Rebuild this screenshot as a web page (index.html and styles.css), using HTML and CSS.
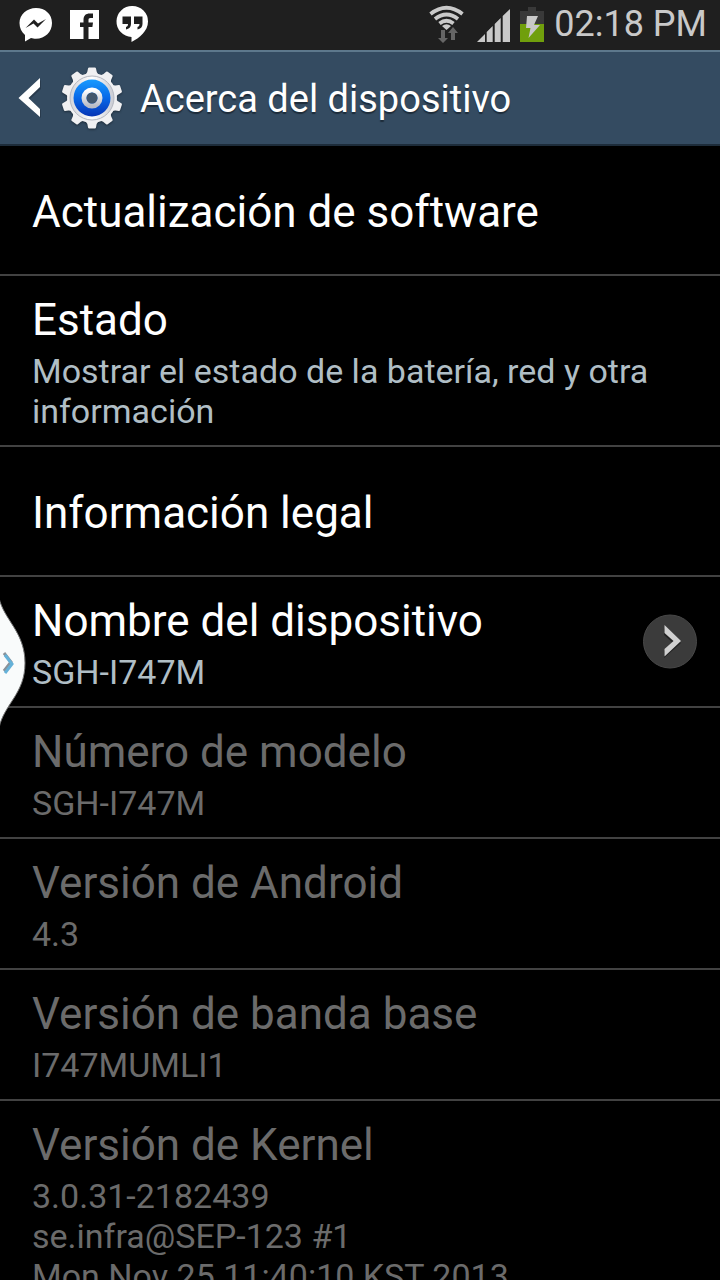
FILE: index.html
```html
<!DOCTYPE html>
<html lang="es">
<head>
<meta charset="utf-8">
<meta name="viewport" content="width=device-width, initial-scale=1">
<title>Acerca del dispositivo</title>
<link rel="stylesheet" href="styles.css">
</head>
<body>
<div class="status">
  <div class="notifications">
    <svg width="34" height="36" viewBox="0 0 34 36" aria-label="Messenger"><path fill="#fff" d="M17 2C8 2 .500 8.500.500 17c0 5 2 9 5.500 12v6.500l6-3.500c1.500.500 3 .700 5 .700 9 0 16-6.700 16-15.700S26 2 17 2z"/><path fill="#1f1f1f" d="M6.500 22l8.500-8.500 4 4 8-4.500-8.500 8.500-4-4z"/></svg>
    <svg width="30" height="30" viewBox="0 0 30 30" aria-label="Facebook"><path fill="#fff" d="M1 1h29v29H1z"/><path fill="#1f1f1f" d="M14.500 30V18H11v-4.500h3.500V11c0-4.500 2.500-6.500 6-6.500H24V9h-2.500c-1.600 0-2 .800-2 2v2.500H24l-.600 4.500h-3.900v12z"/></svg>
    <svg width="34" height="38" viewBox="0 0 34 38" aria-label="Hangouts"><path fill="#fff" d="M17.500 1a15.500 15.500 0 0 0-1 31v5c8-4 16.500-11 16.500-20.500A15.500 15.500 0 0 0 17.500 1z"/><path fill="#1f1f1f" d="M7.500 11.500h8.500V19c0 3-2 5-5 5.500V22c1.500-.500 2-1.500 2-3H7.500zM19 11.500h8.500V19c0 3-2 5-5 5.500V22c1.500-.500 2-1.500 2-3H19z"/></svg>
  </div>
  <div class="system">
    <svg width="38" height="38" viewBox="0 0 38 38" aria-label="Wi-Fi"><g fill="none" stroke="#c9c9c9" stroke-width="3.800"><path d="M1.500 9q16-12.500 32 0"/><path d="M6 14q11.500-9 23 0"/><path d="M10.500 18.500q7-5.500 14 0"/></g><path fill="#c9c9c9" d="M13 21q4.500-3.500 9 0l-4.500 4z"/><path fill="#666" d="M12 25h4v8h3l-5 5-5-5h3zM22 35v-7h-3l5-6 5 6h-3v7z"/></svg>
    <svg width="33" height="36" viewBox="0 0 33 36" aria-label="Señal"><path fill="#c9c9c9" d="M0 36l8-8v8zM9.700 36V26l6-6v16zM17.700 36V18l6-6v24zM25.700 36V10L33 3v33z"/></svg>
    <svg width="24" height="36" viewBox="0 0 24 36" aria-label="Cargando"><path fill="#393939" d="M8 1h8v4h8v13H0V5h8z"/><path fill="#709f0c" d="M0 18h24v18H0z"/><path fill="#c9c9c9" d="M7 10h11l-4 9h6L8.500 32l2-10H6z"/></svg>
    <time>02:18 PM</time>
  </div>
</div>
<header class="bar">
  <button class="back" aria-label="Atrás"><svg width="24" height="42" viewBox="0 0 24 42"><path fill="#1d2c3a" d="M23 3v9L12 22l11 11v8L2 22z" opacity=".5"/><path fill="#fff" d="M22 1v9L10.500 21 22 32v8L.500 21z"/></svg></button>
  <svg class="gear" width="64" height="64" viewBox="-32 -32 64 64" aria-hidden="true">
    <defs>
      <linearGradient id="metal" x1="0" y1="0" x2="1" y2="0"><stop offset="0" stop-color="#d2d3d9"/><stop offset=".5" stop-color="#fff"/><stop offset="1" stop-color="#c8cad2"/></linearGradient>
      <linearGradient id="blue" x1="0" y1="0" x2="0" y2="1"><stop offset="0" stop-color="#189bff"/><stop offset=".5" stop-color="#0868e8"/><stop offset="1" stop-color="#0735b5"/></linearGradient>
      <linearGradient id="ring" x1="0" y1="0" x2="0" y2="1"><stop offset="0" stop-color="#fff"/><stop offset="1" stop-color="#b9bcc6"/></linearGradient>
      <path id="tooth" d="M-6.500-23q2-2 2.500-6.500 .200-1 1.200-1h5.600q1 0 1.200 1Q4.500-25 6.500-23z"/>
    </defs>
    <g fill="#f0f0f2">
      <use href="#tooth"/><use href="#tooth" transform="rotate(36)"/><use href="#tooth" transform="rotate(72)"/><use href="#tooth" transform="rotate(108)"/><use href="#tooth" transform="rotate(144)"/><use href="#tooth" transform="rotate(180)"/><use href="#tooth" transform="rotate(216)"/><use href="#tooth" transform="rotate(252)"/><use href="#tooth" transform="rotate(288)"/><use href="#tooth" transform="rotate(324)"/>
    </g>
    <circle r="25" fill="#f0f0f2"/>
    <circle r="22" fill="url(#metal)" stroke="#b4b7c0"/>
    <circle r="18.500" fill="url(#blue)"/>
    <circle r="8" fill="none" stroke="url(#ring)" stroke-width="5"/>
    <circle r="5.500" fill="#42576d"/>
  </svg>
  <h1>Acerca del dispositivo</h1>
</header>
<main class="list">
  <button class="row single"><span class="title">Actualización de software</span></button>
  <button class="row"><span class="title">Estado</span><span class="summary">Mostrar el estado de la batería, red y otra información</span></button>
  <button class="row single"><span class="title">Información legal</span></button>
  <button class="row more">
    <span class="text"><span class="title">Nombre del dispositivo</span><span class="summary">SGH-I747M</span></span>
    <svg width="56" height="56" viewBox="0 0 56 56" aria-hidden="true"><circle cx="28" cy="27.500" r="26.500" fill="#3b3b3b" stroke="#484848"/><path fill="#222" d="M22 14v7l9 8-9 8v7l17-15z"/><path fill="#d0d0d0" d="M22.500 11v8l9 8-9 8v7.500L39 27z"/></svg>
  </button>
  <div class="row disabled"><span class="title">Número de modelo</span><span class="summary">SGH-I747M</span></div>
  <div class="row disabled"><span class="title">Versión de Android</span><span class="summary">4.3</span></div>
  <div class="row disabled"><span class="title">Versión de banda base</span><span class="summary">I747MUMLI1</span></div>
  <div class="row disabled"><span class="title">Versión de Kernel</span><span class="summary">3.0.31-2182439<br>se.infra@SEP-123 #1<br>Mon Nov 25 11:40:10 KST 2013</span></div>
</main>
<button class="edge" aria-label="Abrir panel"><svg width="27" height="134" viewBox="0 0 27 134"><path fill="#f9fbfb" stroke="#777" d="M-1 2C4 24 25 36 25 67S4 108-1 132z"/><path fill="none" stroke="#8a9299" stroke-width="3" d="M4 57l7 9-7 9"/><path fill="none" stroke="#65b1d8" stroke-width="3" d="M5 59l7 9-7 9"/></svg></button>
</body>
</html>
```
FILE: styles.css
```css
* { box-sizing: border-box; }

body {
  margin: 0;
  height: 100vh;
  display: flex;
  flex-direction: column;
  overflow: hidden;
  position: relative;
  background: #000;
  color: #fff;
  font-family: Roboto, sans-serif;
}

button {
  margin: 0;
  padding: 0;
  border: 0;
  background: none;
  color: inherit;
  font: inherit;
  text-align: left;
}

svg { display: block; flex: none; }

.status {
  flex: none;
  height: 50px;
  padding: 0 13px 2px 19px;
  display: flex;
  align-items: center;
  justify-content: space-between;
  background: #1f1f1f;
}

.notifications,
.system {
  display: flex;
  align-items: center;
}

.notifications { gap: 16px; }

.system { gap: 10px; }

.status time {
  color: #c9c9c9;
  font-size: 36px;
  line-height: 48px;
}

.bar {
  flex: none;
  height: 96px;
  padding: 0 18px;
  display: flex;
  align-items: center;
  background: #344b61;
  border-top: 2px solid #5d788c;
  border-bottom: 2px solid #1d2c3a;
}

.gear {
  margin: 0 16px 0 18px;
  filter: drop-shadow(0 1px 1px #1d2c3a);
}

h1 {
  margin: 0;
  padding-top: 2px;
  font-size: 38px;
  font-weight: 400;
  line-height: 48px;
  text-shadow: 0 2px 1px #1d2c3a;
}

.list {
  flex: 1;
  min-height: 0;
  overflow: hidden;
}

.row {
  display: block;
  width: 100%;
  padding: 14px 32px;
  border-bottom: 2px solid #424242;
}

.single { padding: 36px 32px 32px; }

.more {
  display: flex;
  align-items: center;
  justify-content: space-between;
  padding-right: 22px;
}

.title,
.summary { display: block; }

.title {
  font-size: 44px;
  line-height: 60px;
}

.title + .summary { padding-top: 1px; }

.summary {
  color: #b0bec5;
  font-size: 34px;
  line-height: 40px;
}

.disabled,
.disabled .summary { color: #6b6b6b; }

.edge {
  position: absolute;
  left: 0;
  top: 596px;
}
```
